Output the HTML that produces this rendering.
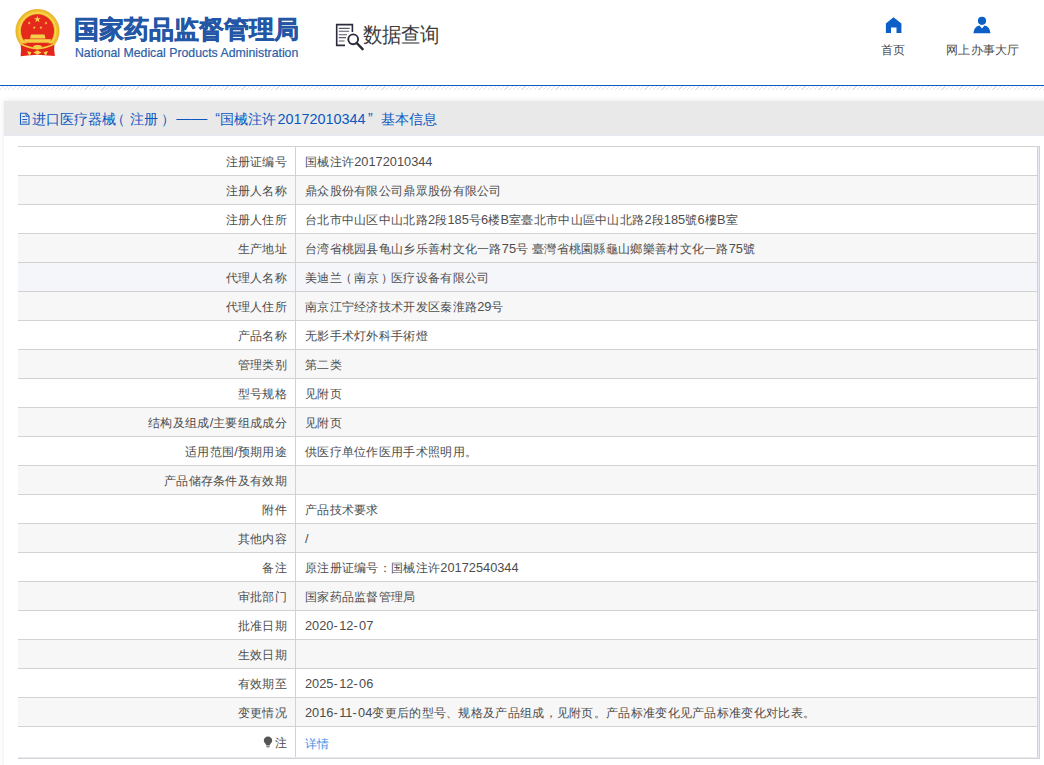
<!DOCTYPE html>
<html><head><meta charset="utf-8">
<style>
*{margin:0;padding:0;box-sizing:border-box}
html,body{width:1044px;height:765px;overflow:hidden;background:#fff;font-family:"Liberation Sans",sans-serif}
.abs{position:absolute;white-space:nowrap}
#topline{position:absolute;left:0;top:85px;width:1044px;height:1px;background:#075dc5}
#hatch{position:absolute;left:0;top:86px;width:1044px;height:4px;
 background:repeating-linear-gradient(135deg,#fff 0,#fff 2.2px,#e2e2e2 2.2px,#e2e2e2 3px)}
#panel{position:absolute;left:4px;top:101px;width:1050px;height:680px;background:#fff;
 box-shadow:0 0 6px rgba(0,0,0,0.09)}
#band{position:absolute;left:4px;top:101px;width:1040px;height:35px;background:#e9e9e9;border-bottom:1px solid #e4e8f0}
.bt{position:absolute;top:109px;font-size:14px;line-height:20px;color:#0b57c2;white-space:nowrap}
#tbl{position:absolute;left:18px;top:146px;width:1022px;border-top:1px solid #d2d2d2;border-right:1px solid #d2d2d2;border-bottom:1px solid #d4d4d4;background:#e8ebf3;padding:0 1px 1px 0}
#inner{border-right:1px solid #d2d2d2;background:#fff}
.r{height:29px;border-bottom:1px solid #d2d2d2;position:relative;font-size:12.2px;letter-spacing:0.3px;color:#4d4d4d}
.r .n{font-size:12.8px;letter-spacing:0}
.lp{position:relative;left:-2.3px}
.rp{position:relative;left:2.5px}
.hy{letter-spacing:1.4px}
.r.g{background:#f7f7f7}
.r.h{background:#f5f6fa}
.r .l{position:absolute;left:0;top:0;width:278px;height:28px;border-right:1px solid #d2d2d2;text-align:right;padding-right:8px;line-height:30px;white-space:nowrap}
.r .v{position:absolute;left:287px;top:0;line-height:30px;white-space:nowrap}
.r.last{height:30px;border-bottom:0}
.r.last .l{height:30px;line-height:33px}
.r.last .v{line-height:35px;color:#3d8fe6}
.bulb{vertical-align:-1px;margin-right:2px}
</style></head><body>
<svg class="abs" style="left:0;top:0" width="80" height="70" viewBox="0 0 80 70">
 <circle cx="37.5" cy="31" r="21.6" fill="#f0bf2c" stroke="#e0a820" stroke-width="0.8"/>
 <circle cx="37.5" cy="31" r="18.3" fill="none" stroke="#f8d95a" stroke-width="1.2"/>
 <circle cx="37.5" cy="30.8" r="16.6" fill="#e52a1d"/>
 <polygon points="37.40,15.70 38.21,18.19 40.82,18.19 38.71,19.72 39.52,22.21 37.40,20.68 35.28,22.21 36.09,19.72 33.98,18.19 36.59,18.19" fill="#f7d34a"/>
 <polygon points="30.05,21.53 29.79,22.74 30.86,23.35 29.63,23.48 29.38,24.69 28.88,23.56 27.65,23.69 28.56,22.86 28.06,21.74 29.13,22.35" fill="#f7d34a"/>
 <polygon points="45.15,21.53 46.07,22.35 47.14,21.74 46.64,22.86 47.55,23.69 46.32,23.56 45.82,24.69 45.57,23.48 44.34,23.35 45.41,22.74" fill="#f7d34a"/>
 <polygon points="34.74,26.06 34.80,27.29 36.00,27.61 34.84,28.05 34.91,29.29 34.13,28.33 32.98,28.77 33.65,27.73 32.87,26.77 34.07,27.09" fill="#f7d34a"/>
 <polygon points="40.56,26.06 41.23,27.09 42.43,26.77 41.65,27.73 42.32,28.77 41.17,28.33 40.39,29.29 40.46,28.05 39.30,27.61 40.50,27.29" fill="#f7d34a"/>
 <path d="M31 34.5 H44.5 L45.5 38.5 H30 Z" fill="#f5cf48"/>
 <rect x="24.3" y="39.2" width="26.5" height="3.5" fill="#f5cf48"/>
 <path d="M20.6 43.4 L54.4 43.4 L54.2 50 L54.9 56 L47.5 55.5 L37.5 54.8 L27.5 55.5 L20.6 56.2 L21 50 Z" fill="#e3261c"/>
 <path d="M20 43.6 Q37.5 53.5 55 43.6" fill="none" stroke="#f4c93a" stroke-width="1.7"/>
 <path d="M32.8 46.3 Q37.5 43.8 42.2 46.3 Q40 49.5 37.5 49.2 Q35 49.5 32.8 46.3 Z" fill="#f5cf48"/>
 <path d="M33.3 52.5 L37.5 50.2 L41.7 52.5 L37.5 54.8 Z" fill="#f5cf48"/>
 <path d="M27 51 L31.5 52.2 L29.3 56 Z M48 51 L43.5 52.2 L45.7 56 Z" fill="#f5d650"/>
</svg>
<div class="abs" style="left:74px;top:13px;font-size:25px;font-weight:bold;color:#2456a6;-webkit-text-stroke:0.5px #2456a6">国家药品监督管理局</div>
<div class="abs" style="left:75px;top:44.8px;font-size:13px;color:#2a5ea8;-webkit-text-stroke:0.2px #2a5ea8;transform:scaleX(0.945);transform-origin:0 0">National Medical Products Administration</div>
<svg class="abs" style="left:330px;top:18px" width="40" height="36" viewBox="0 0 40 36">
 <path d="M22.4 14 V6.6 H6.7 V27.4 H15" fill="none" stroke="#2b2b3c" stroke-width="1.6"/>
 <path d="M8.8 10.4H19.7 M8.8 13.3H19.2 M8.8 16.7H17 M8.8 19.6H16 M8.8 23H14.5" stroke="#5a5a66" stroke-width="1.1"/>
 <circle cx="23.2" cy="21.3" r="4.9" fill="none" stroke="#2b2b3c" stroke-width="1.9"/>
 <path d="M26.7 25 L32.6 31.2" stroke="#2b2b3c" stroke-width="2.5" stroke-linecap="round"/>
</svg>
<div class="abs" style="left:363px;top:20.5px;font-size:19px;color:#3b3b3b;transform:scaleY(1.08);transform-origin:0 0">数据查询</div>
<svg class="abs" style="left:880px;top:14px" width="28" height="22" viewBox="0 0 28 22">
 <path d="M5.9 9.4 L13.5 3.2 L21.4 9.4 V18.9 H16.5 V13.6 H11 V18.9 H5.9 Z" fill="#0c5fc6"/>
</svg>
<div class="abs" style="left:881px;top:42px;font-size:12.2px;letter-spacing:0.3px;color:#4a4a4a">首页</div>
<svg class="abs" style="left:968px;top:14px" width="28" height="22" viewBox="0 0 28 22">
 <circle cx="14" cy="6.8" r="4.1" fill="#0c5fc6"/>
 <path d="M5.4 19.3 Q6 12.5 11.5 11.5 L14 14.5 L16.5 11.5 Q22 12.5 22.4 19.3 Z" fill="#0c5fc6"/>
</svg>
<div class="abs" style="left:946px;top:42px;font-size:12.2px;letter-spacing:0.3px;color:#4a4a4a">网上办事大厅</div>
<div id="topline"></div>
<div id="hatch"></div>

<div id="panel"></div>
<div id="band"></div>
<svg class="abs" style="left:19px;top:112px" width="12" height="14" viewBox="0 0 12 14">
 <path d="M1.5 1.2 H7.3 L10 3.9 V12.3 H1.5 Z" fill="none" stroke="#1d5fc4" stroke-width="1.1"/>
 <path d="M7 1.2 V4.3 H10" fill="none" stroke="#1d5fc4" stroke-width="1"/>
 <path d="M3.3 4.5H6 M3.3 7.5H8.2 M3.3 10H8.2" stroke="#1d5fc4" stroke-width="1"/>
</svg>
<div class="bt" style="left:31.5px">进口医疗器械</div>
<div class="bt" style="left:111.2px">（</div>
<div class="bt" style="left:129.5px">注册</div>
<div class="bt" style="left:160.9px">）</div>
<div class="bt" style="left:176.2px;top:108.3px;font-size:15.5px">——</div>
<div class="bt" style="left:215.2px;top:108px">“</div>
<div class="bt" style="left:220.2px">国械注许</div>
<div class="bt" style="left:277.5px;font-size:14.4px">20172010344</div>
<div class="bt" style="left:368px;top:108px">”</div>
<div class="bt" style="left:380.5px">基本信息</div>

<div id="tbl"><div id="inner">
 <div class="r"><div class="l">注册证编号</div><div class="v">国械注许<span class="n">20172010344</span></div></div>
 <div class="r g"><div class="l">注册人名称</div><div class="v">鼎众股份有限公司鼎眾股份有限公司</div></div>
 <div class="r"><div class="l">注册人住所</div><div class="v">台北市中山区中山北路<span class="n">2</span>段<span class="n">185</span>号<span class="n">6</span>楼<span class="n">B</span>室臺北市中山區中山北路<span class="n">2</span>段<span class="n">185</span>號<span class="n">6</span>樓<span class="n">B</span>室</div></div>
 <div class="r g"><div class="l">生产地址</div><div class="v">台湾省桃园县龟山乡乐善村文化一路<span class="n">75</span>号<span class="n"> </span>臺灣省桃園縣龜山鄉樂善村文化一路<span class="n">75</span>號</div></div>
 <div class="r h"><div class="l">代理人名称</div><div class="v">美迪兰<span class="lp">（</span>南京<span class="rp">）</span>医疗设备有限公司</div></div>
 <div class="r g"><div class="l">代理人住所</div><div class="v">南京江宁经济技术开发区秦淮路<span class="n">29</span>号</div></div>
 <div class="r"><div class="l">产品名称</div><div class="v">无影手术灯外科手術燈</div></div>
 <div class="r g"><div class="l">管理类别</div><div class="v">第二类</div></div>
 <div class="r"><div class="l">型号规格</div><div class="v">见附页</div></div>
 <div class="r g"><div class="l">结构及组成<span class="n">/</span>主要组成成分</div><div class="v">见附页</div></div>
 <div class="r"><div class="l">适用范围<span class="n">/</span>预期用途</div><div class="v">供医疗单位作医用手术照明用。</div></div>
 <div class="r g"><div class="l">产品储存条件及有效期</div><div class="v"></div></div>
 <div class="r"><div class="l">附件</div><div class="v">产品技术要求</div></div>
 <div class="r g"><div class="l">其他内容</div><div class="v"><span class="n">/</span></div></div>
 <div class="r"><div class="l">备注</div><div class="v">原注册证编号：国械注许<span class="n">20172540344</span></div></div>
 <div class="r g"><div class="l">审批部门</div><div class="v">国家药品监督管理局</div></div>
 <div class="r"><div class="l">批准日期</div><div class="v"><span class="n">2020<span class="hy">-</span>12<span class="hy">-</span>07</span></div></div>
 <div class="r g"><div class="l">生效日期</div><div class="v"></div></div>
 <div class="r"><div class="l">有效期至</div><div class="v"><span class="n">2025<span class="hy">-</span>12<span class="hy">-</span>06</span></div></div>
 <div class="r g"><div class="l">变更情况</div><div class="v"><span class="n">2016<span class="hy">-</span>11<span class="hy">-</span>04</span>变更后的型号、规格及产品组成，见附页。产品标准变化见产品标准变化对比表。</div></div>
 <div class="r last"><div class="l"><svg class="bulb" width="10" height="12" viewBox="0 0 10 12"><path d="M5 0.6 C2.6 0.6 0.8 2.3 0.8 4.6 C0.8 6.2 1.8 7.2 2.8 8.2 L3.1 9.2 H6.9 L7.2 8.2 C8.2 7.2 9.2 6.2 9.2 4.6 C9.2 2.3 7.4 0.6 5 0.6 Z" fill="#555"/><rect x="3.2" y="9.6" width="3.6" height="1.8" rx="0.8" fill="#888"/></svg>注</div><div class="v lk">详情</div></div>
</div></div>
</body></html>
